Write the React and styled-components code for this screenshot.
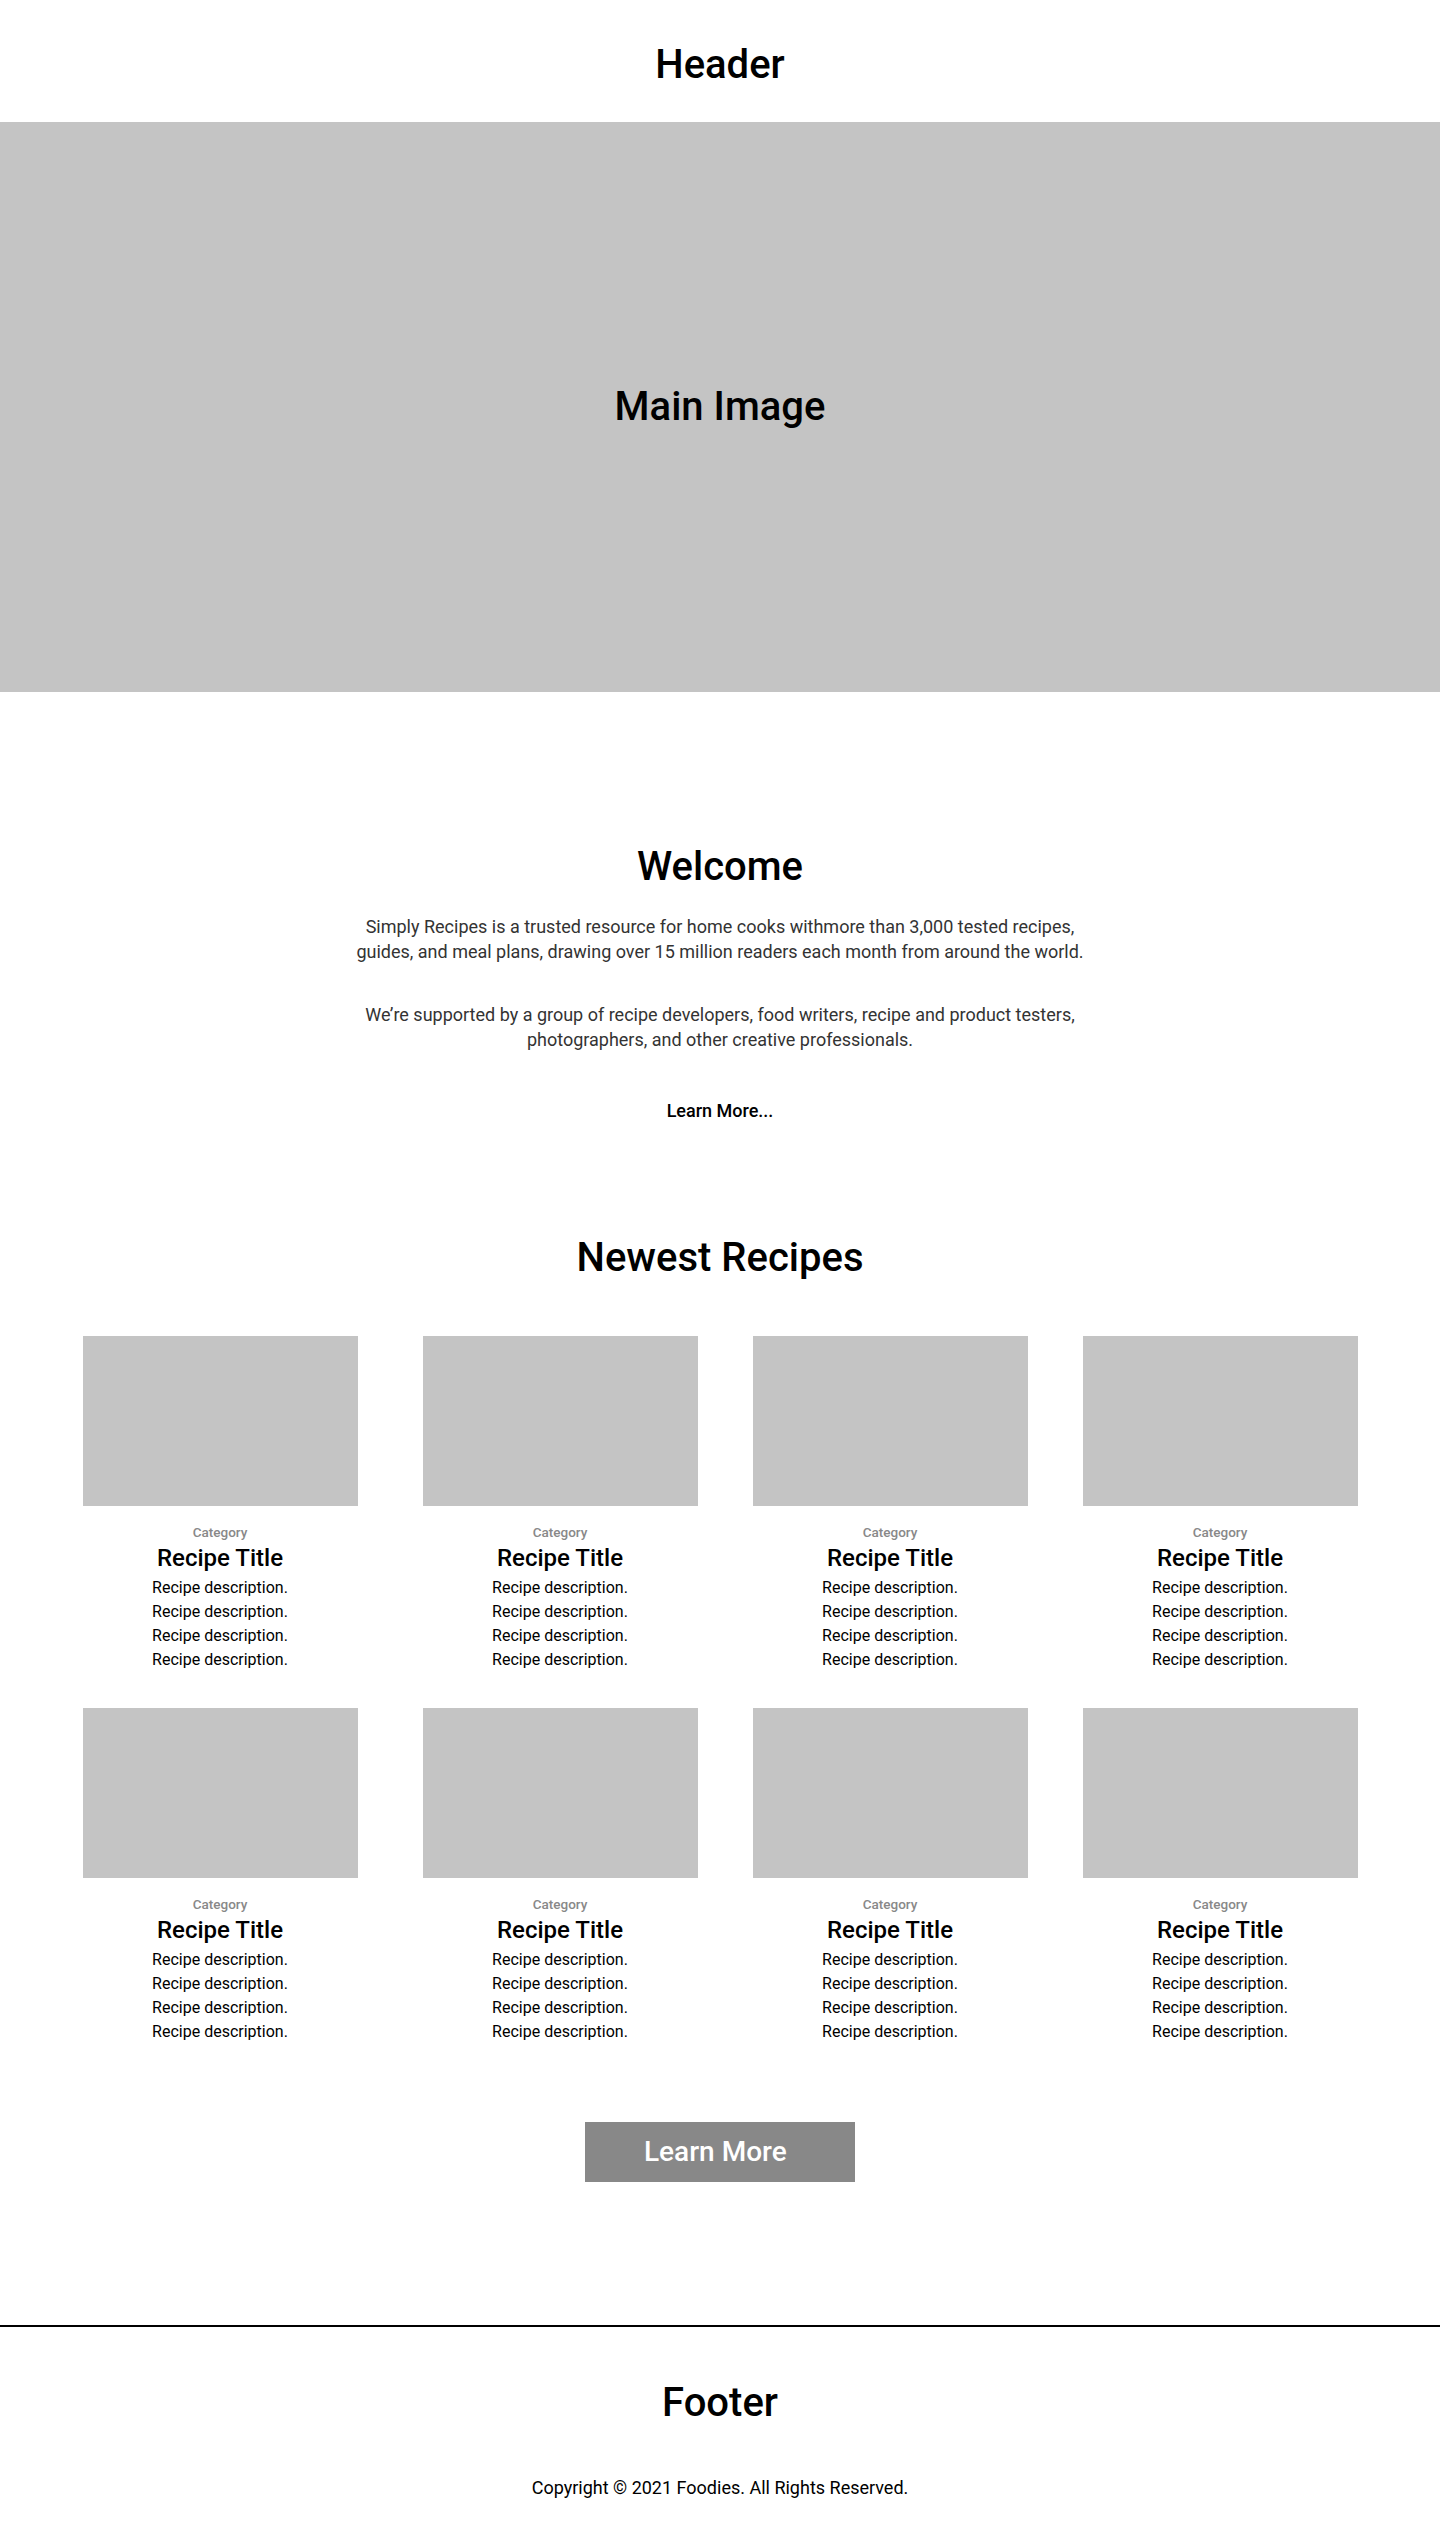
import React from 'react';
import styled, { createGlobalStyle } from 'styled-components';

const recipes = Array.from({ length: 8 }, (_, i) => ({
    id: i,
    category: 'Category',
    title: 'Recipe Title',
    lines: ['Recipe description.', 'Recipe description.', 'Recipe description.', 'Recipe description.'],
}));

const App = () => {
    return (
        <>
            <GlobalStyle />
            <Header>
                <DisplayTitle as="h1">Header</DisplayTitle>
            </Header>
            <Hero>
                <DisplayTitle>Main Image</DisplayTitle>
            </Hero>
            <Main>
                <About>
                    <DisplayTitle>Welcome</DisplayTitle>
                    <Intro>
                        Simply Recipes is a trusted resource for home cooks withmore than 3,000 tested recipes,
                        guides, and meal plans, drawing over 15 million readers each month from around the world.
                    </Intro>
                    <Intro>
                        We’re supported by a group of recipe developers, food writers, recipe and product testers,
                        photographers, and other creative professionals.
                    </Intro>
                    <TextLink href="#">Learn More...</TextLink>
                </About>
                <Recipes>
                    <DisplayTitle>Newest Recipes</DisplayTitle>
                    <RecipeGrid>
                        {recipes.map((recipe) => (
                            <RecipeCard key={recipe.id}>
                                <Thumb />
                                <Category>{recipe.category}</Category>
                                <RecipeTitle>{recipe.title}</RecipeTitle>
                                <Description>
                                    {recipe.lines.map((line, i) => (
                                        <span key={i}>{line}</span>
                                    ))}
                                </Description>
                            </RecipeCard>
                        ))}
                    </RecipeGrid>
                    <MoreButton type="button">Learn More</MoreButton>
                </Recipes>
            </Main>
            <Footer>
                <DisplayTitle as="h2">Footer</DisplayTitle>
                <Copyright>Copyright © 2021 Foodies. All Rights Reserved.</Copyright>
            </Footer>
        </>
    );
};

const GlobalStyle = createGlobalStyle`
    * {
        box-sizing: border-box;
    }

    body {
        margin: 0;
        background: #fff;
        color: #000;
        font-family: Roboto, "Liberation Sans", Arial, sans-serif;
    }
`;

const DisplayTitle = styled.h2`
    margin: 0;
    font-size: 40px;
    font-weight: 500;
    line-height: 48px;
    text-align: center;
`;

const Header = styled.header`
    padding: 41px 0 33px;
`;

const Hero = styled.section`
    height: 570px;
    display: flex;
    align-items: center;
    justify-content: center;
    background: #c4c4c4;
`;

const Main = styled.main`
    display: flex;
    flex-direction: column;
    align-items: center;
    padding: 151px 0 143px;
`;

const About = styled.section`
    display: flex;
    flex-direction: column;
    align-items: center;
    text-align: center;

    ${DisplayTitle} {
        margin-bottom: 23px;
    }
`;

const Intro = styled.p`
    max-width: 740px;
    margin: 0;
    font-size: 18px;
    line-height: 25px;
    color: #333;

    & + & {
        margin-top: 38px;
    }
`;

const TextLink = styled.a`
    margin-top: 46px;
    font-size: 18px;
    font-weight: 500;
    line-height: 25px;
    color: #000;
    text-decoration: none;
`;

const Recipes = styled.section`
    display: flex;
    flex-direction: column;
    align-items: center;
    margin-top: 111px;
`;

const RecipeGrid = styled.div`
    display: grid;
    grid-template-columns: 285px repeat(3, 275px);
    column-gap: 55px;
    row-gap: 36px;
    margin-top: 54px;
`;

const RecipeCard = styled.article`
    width: 275px;
    display: flex;
    flex-direction: column;
    text-align: center;
`;

const Thumb = styled.div`
    height: 170px;
    background: #c4c4c4;
`;

const Category = styled.span`
    margin-top: 16px;
    font-size: 13.5px;
    font-weight: 500;
    line-height: 20px;
    color: #888;
`;

const RecipeTitle = styled.h3`
    margin: 2px 0 0;
    font-size: 24px;
    font-weight: 500;
    line-height: 28px;
`;

const Description = styled.p`
    display: flex;
    flex-direction: column;
    margin: 4px 0 0;
    font-size: 16px;
    line-height: 24px;
`;

const MoreButton = styled.button`
    width: 270px;
    height: 60px;
    margin-top: 78px;
    padding: 0 0 0 59px;
    border: none;
    background: #888;
    color: #fff;
    font-family: inherit;
    font-size: 28px;
    font-weight: 500;
    line-height: 60px;
    text-align: left;
    cursor: pointer;
`;

const Footer = styled.footer`
    display: flex;
    flex-direction: column;
    align-items: center;
    padding: 52px 0 46px;
    border-top: 2px solid #000;
`;

const Copyright = styled.p`
    margin: 48px 0 0;
    font-size: 18px;
    line-height: 25px;
`;

export default App;
